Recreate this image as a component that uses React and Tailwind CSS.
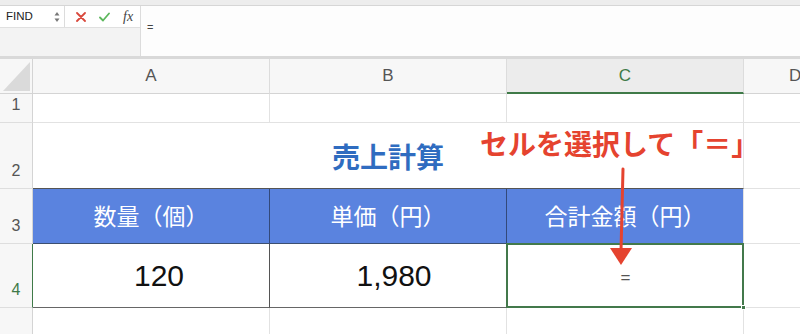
import React from 'react';

const JP = { fontFamily: '"Noto Sans CJK JP", "Noto Sans", sans-serif' };
const LAT = { fontFamily: '"Liberation Sans", Arial, sans-serif' };

const COLS = ['w-[33px]', 'w-[237px]', 'w-[237px]', 'w-[237px]', 'w-[110px]'];

const RowNum = ({ n, active }) => (
  <div
    className={`w-[33px] shrink-0 flex items-end justify-center pb-[5px] bg-[#f7f7f7] border-r ${
      active ? 'border-r-[#3f7a48] text-[#3f7a48]' : 'border-r-[#d4d4d4] text-[#555]'
    } border-b border-b-[#dedede] text-[16px]`}
    style={LAT}
  >
    {n}
  </div>
);

export default function App() {
  return (
    <div className="w-[800px] h-[334px] overflow-hidden bg-white relative select-none">
      {/* top band */}
      <div className="h-[6px] bg-[#ededed] border-b border-[#d6d6d6]" />

      {/* formula bar */}
      <div className="h-[50px] flex">
        <div className="w-[141px] shrink-0 flex flex-col border-r border-[#dcdcdc]">
          <div className="h-[21px] flex items-center bg-white">
            <div className="w-[65px] h-full flex items-center justify-between pl-[6px] pr-[4px] border-r border-[#dcdcdc]">
              <span className="text-[11.5px] text-[#222]" style={LAT}>FIND</span>
              <svg width="6" height="12" viewBox="0 0 6 12">
                <path d="M3 1 L5.5 4.5 L0.5 4.5 Z" fill="#777" />
                <path d="M3 11 L5.5 7.5 L0.5 7.5 Z" fill="#777" />
              </svg>
            </div>
            <div className="flex-1 flex items-center pl-[11px] gap-[13px]">
              <svg width="10" height="10" viewBox="0 0 10 10">
                <path d="M1 1 L9 9 M9 1 L1 9" stroke="#d9483c" strokeWidth="1.8" strokeLinecap="round" />
              </svg>
              <svg width="11" height="10" viewBox="0 0 11 10">
                <path d="M1 5.5 L4 8.5 L10 1.5" fill="none" stroke="#5cb75c" strokeWidth="1.8" strokeLinecap="round" strokeLinejoin="round" />
              </svg>
              <span className="italic text-[14px] text-[#444] leading-none" style={{ fontFamily: '"Liberation Serif", serif' }}>
                fx
              </span>
            </div>
          </div>
          <div className="flex-1 bg-[#f3f3f3] border-t border-[#e0e0e0]" />
        </div>
        <div className="flex-1 bg-[#fdfdfd] pl-[6px] pt-[7px]">
          <span className="text-[11px] text-[#444] leading-none" style={LAT}>=</span>
        </div>
      </div>
      <div className="h-[3px] bg-[#d9d9d9]" />

      {/* sheet */}
      <div className="relative">
        {/* column headers */}
        <div className="flex h-[35px]">
          <div className="w-[33px] shrink-0 bg-[#f7f7f7] border-r border-b border-[#d4d4d4] flex items-end justify-end pr-[2px] pb-[2px]">
            <svg width="27" height="29" viewBox="0 0 27 29">
              <path d="M0 29 L27 29 L27 0 Z" fill="#dadada" />
            </svg>
          </div>
          {['A', 'B', 'C', 'D'].map((c, i) => (
            <div
              key={c}
              className={`${COLS[i + 1]} shrink-0 flex items-center justify-center text-[17px] font-light border-r border-[#dcdcdc] ${
                c === 'C'
                  ? 'bg-[#ececec] text-[#3f7a48] border-b-2 border-b-[#3f7a48]'
                  : 'bg-[#f7f7f7] text-[#555] border-b border-b-[#d4d4d4]'
              } ${c === 'D' ? 'justify-start pl-[45px]' : ''}`}
              style={LAT}
            >
              {c}
            </div>
          ))}
        </div>

        {/* row 1 */}
        <div className="flex h-[29px]">
          <RowNum n="1" />
          {[1, 2, 3, 4].map(i => (
            <div key={i} className={`${COLS[i]} shrink-0 border-r border-b border-[#e2e2e2]`} />
          ))}
        </div>

        {/* row 2 - merged title */}
        <div className="flex h-[66px]">
          <RowNum n="2" />
          <div
            className="w-[711px] shrink-0 flex items-center justify-center pt-[1px] border-r border-[#e2e2e2] border-b border-b-[#555] text-[28px] font-bold text-[#2f6cc0]"
            style={JP}
          >
            売上計算
          </div>
          <div className="w-[110px] shrink-0 border-b border-[#e2e2e2]" />
        </div>

        {/* row 3 - header */}
        <div className="flex h-[55px]">
          <RowNum n="3" />
          {['数量（個）', '単価（円）', '合計金額（円）'].map((t, i) => (
            <div
              key={t}
              className={`${COLS[i + 1]} shrink-0 bg-[#5a83df] text-white text-[23px] flex items-center justify-center pb-[1px] border-b border-b-[#3c4f70] ${
                i < 2 ? 'border-r border-r-[#33497a]' : 'border-r border-r-[#e2e2e2]'
              }`}
              style={JP}
            >
              {t}
            </div>
          ))}
          <div className="w-[110px] shrink-0 border-b border-[#e2e2e2]" />
        </div>

        {/* row 4 - values */}
        <div className="flex h-[64px]">
          <RowNum n="4" active />
          <div className="w-[237px] shrink-0 border-r border-r-[#555] border-b border-b-[#666] flex items-center justify-center pl-[16px] text-[30px] text-[#111]" style={LAT}>
            120
          </div>
          <div className="w-[237px] shrink-0 border-r border-r-[#555] border-b border-b-[#666] flex items-center justify-center pl-[12px] text-[30px] text-[#111]" style={LAT}>
            1,980
          </div>
          <div className="w-[237px] shrink-0 relative border-r border-b border-[#e2e2e2] flex items-center justify-center pl-[1px] pt-[4px] text-[17px] text-[#555]" style={LAT}>
            =
            <div className="absolute -left-px -top-px -right-px -bottom-px border-2 border-[#43794b]" />
            <div className="absolute -right-[3px] -bottom-[3px] w-[5px] h-[5px] bg-[#43794b] border border-white" />
          </div>
          <div className="w-[110px] shrink-0 border-b border-[#e2e2e2]" />
        </div>

        {/* row 5 */}
        <div className="flex h-[40px]">
          <div className="w-[33px] shrink-0 bg-[#f7f7f7] border-r border-[#d4d4d4]" />
          {[1, 2, 3, 4].map(i => (
            <div key={i} className={`${COLS[i]} shrink-0 border-r border-[#e2e2e2]`} />
          ))}
        </div>

        {/* annotation */}
        <div
          className="absolute left-[480px] top-[70px] text-[28px] font-bold text-[#e5432f] whitespace-nowrap leading-none"
          style={JP}
        >
          セルを選択して「＝」
        </div>
        <svg className="absolute left-[600px] top-[108px]" width="44" height="100" viewBox="0 0 44 100">
          <path d="M23 2 L21 84" stroke="#e5432f" strokeWidth="3" strokeLinecap="round" />
          <path d="M10 81 L32 81 L21 98 Z" fill="#e5432f" />
        </svg>
      </div>
    </div>
  );
}
